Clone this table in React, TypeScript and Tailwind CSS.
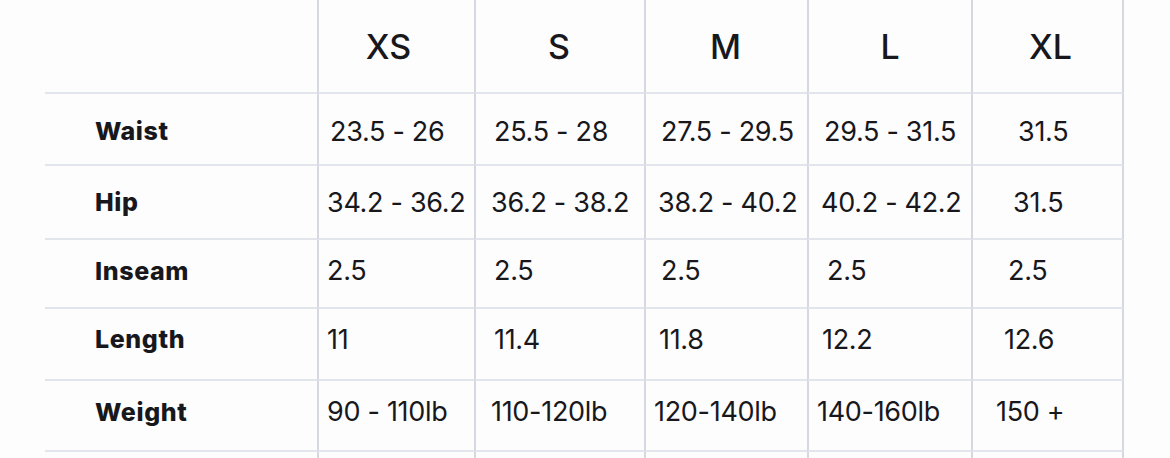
const sizes = [
  { label: "XS", w: "w-[157px]", nudge: "pr-[16px]" },
  { label: "S", w: "w-[170px]", nudge: "pr-[2px]" },
  { label: "M", w: "w-[163px]", nudge: "pr-[2px]" },
  { label: "L", w: "w-[164px]", nudge: "" },
  { label: "XL", w: "w-[153px]", nudge: "pl-[6px]" },
];

type Row = { name: string; h: string; shift: string; cells: { text: string; pl: string }[] };

const rows: Row[] = [
  {
    name: "Waist",
    h: "h-[72px]",
    shift: "pt-[6px]",
    cells: [
      { text: "23.5 - 26", pl: "pl-[11px]" },
      { text: "25.5 - 28", pl: "pl-[18px]" },
      { text: "27.5 - 29.5", pl: "pl-[15px]" },
      { text: "29.5 - 31.5", pl: "pl-[15px]" },
      { text: "31.5", pl: "pl-[45px]" },
    ],
  },
  {
    name: "Hip",
    h: "h-[74px]",
    shift: "pt-[2px]",
    cells: [
      { text: "34.2 - 36.2", pl: "pl-[8px]" },
      { text: "36.2 - 38.2", pl: "pl-[15px]" },
      { text: "38.2 - 40.2", pl: "pl-[12px]" },
      { text: "40.2 - 42.2", pl: "pl-[12px]" },
      { text: "31.5", pl: "pl-[40px]" },
    ],
  },
  {
    name: "Inseam",
    h: "h-[69px]",
    shift: "pb-[4px]",
    cells: [
      { text: "2.5", pl: "pl-[8px]" },
      { text: "2.5", pl: "pl-[18px]" },
      { text: "2.5", pl: "pl-[15px]" },
      { text: "2.5", pl: "pl-[18px]" },
      { text: "2.5", pl: "pl-[35px]" },
    ],
  },
  {
    name: "Length",
    h: "h-[72px]",
    shift: "pb-[8px]",
    cells: [
      { text: "11", pl: "pl-[8px]" },
      { text: "11.4", pl: "pl-[18px]" },
      { text: "11.8", pl: "pl-[13px]" },
      { text: "12.2", pl: "pl-[13px]" },
      { text: "12.6", pl: "pl-[31px]" },
    ],
  },
  {
    name: "Weight",
    h: "h-[71px]",
    shift: "pb-[6px]",
    cells: [
      { text: "90 - 110lb", pl: "pl-[8px]" },
      { text: "110-120lb", pl: "pl-[15px]" },
      { text: "120-140lb", pl: "pl-[8px]" },
      { text: "140-160lb", pl: "pl-[8px]" },
      { text: "150 +", pl: "pl-[23px]" },
    ],
  },
];

const vline = "border-l-2 border-[#d6d8e1]";
const hline = "border-b-2 border-b-[#e3e5ec]";
const edge = "border-r-2 border-r-[#d6d8e1]";

export default function App() {
  return (
    <div className="h-[458px] w-[1170px] overflow-hidden bg-[#fdfdfe] font-['Inter','Liberation_Sans',sans-serif] text-[#18181c]">
      <div className="ml-[45px] flex w-[1080px] flex-col">
        {/* header */}
        <div className="flex h-[94px]">
          <div className={`w-[272px] ${hline}`} />
          {sizes.map((s, i) => (
            <div
              key={s.label}
              className={`${s.w} ${vline} ${hline} ${i === 4 ? edge : ""} ${s.nudge} flex items-center justify-center text-[34px] font-medium`}
            >
              {s.label}
            </div>
          ))}
        </div>

        {rows.map((r) => (
          <div key={r.name} className={`flex ${r.h}`}>
            <div className={`w-[272px] ${hline} ${r.shift} flex items-center pl-[50px] text-[25px] font-extrabold tracking-[0.6px]`}>
              {r.name}
            </div>
            {r.cells.map((c, i) => (
              <div
                key={i}
                className={`${sizes[i].w} ${vline} ${hline} ${i === 4 ? edge : ""} ${c.pl} ${r.shift} flex items-center whitespace-nowrap text-[27px] tracking-[-0.3px]`}
              >
                {c.text}
              </div>
            ))}
          </div>
        ))}

        {/* trailing row, cut off by the frame */}
        <div className="flex h-[40px]">
          <div className="w-[272px]" />
          {sizes.map((s, i) => (
            <div key={s.label} className={`${s.w} ${vline} ${i === 4 ? edge : ""}`} />
          ))}
        </div>
      </div>
    </div>
  );
}
